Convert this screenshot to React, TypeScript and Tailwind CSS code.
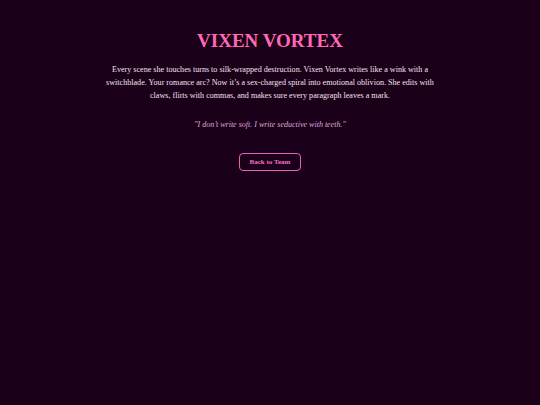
export default function App() {
  return (
    <div
      className="min-h-[405px] w-full bg-[#1a0019] text-[#f5e3ef]"
      style={{ fontFamily: '"Liberation Serif", "Times New Roman", serif' }}
    >
      <div className="mx-auto flex max-w-[334px] flex-col items-center pt-[29px] text-center">
        {/* Title */}
        <h1 className="text-[19px] font-bold leading-[24px] text-[#ff69b4]">VIXEN VORTEX</h1>

        {/* Bio */}
        <p className="mt-[10px] text-[8.1px] leading-[13px]">
          Every scene she touches turns to silk-wrapped destruction. Vixen Vortex writes like a wink with a
          switchblade. Your romance arc? Now it’s a sex-charged spiral into emotional oblivion. She edits with
          claws, flirts with commas, and makes sure every paragraph leaves a mark.
        </p>

        {/* Quote */}
        <p className="mt-[16px] text-[8px] leading-[13px] italic text-[#dcaad8]">
          "I don’t write soft. I write seductive with teeth."
        </p>

        {/* Button */}
        <button
          type="button"
          className="mt-[22px] h-[18px] w-[62px] rounded-[4px] border border-[#e862bd] text-[7px] font-bold text-[#f070c8]"
        >
          Back to Team
        </button>
      </div>
    </div>
  );
}
